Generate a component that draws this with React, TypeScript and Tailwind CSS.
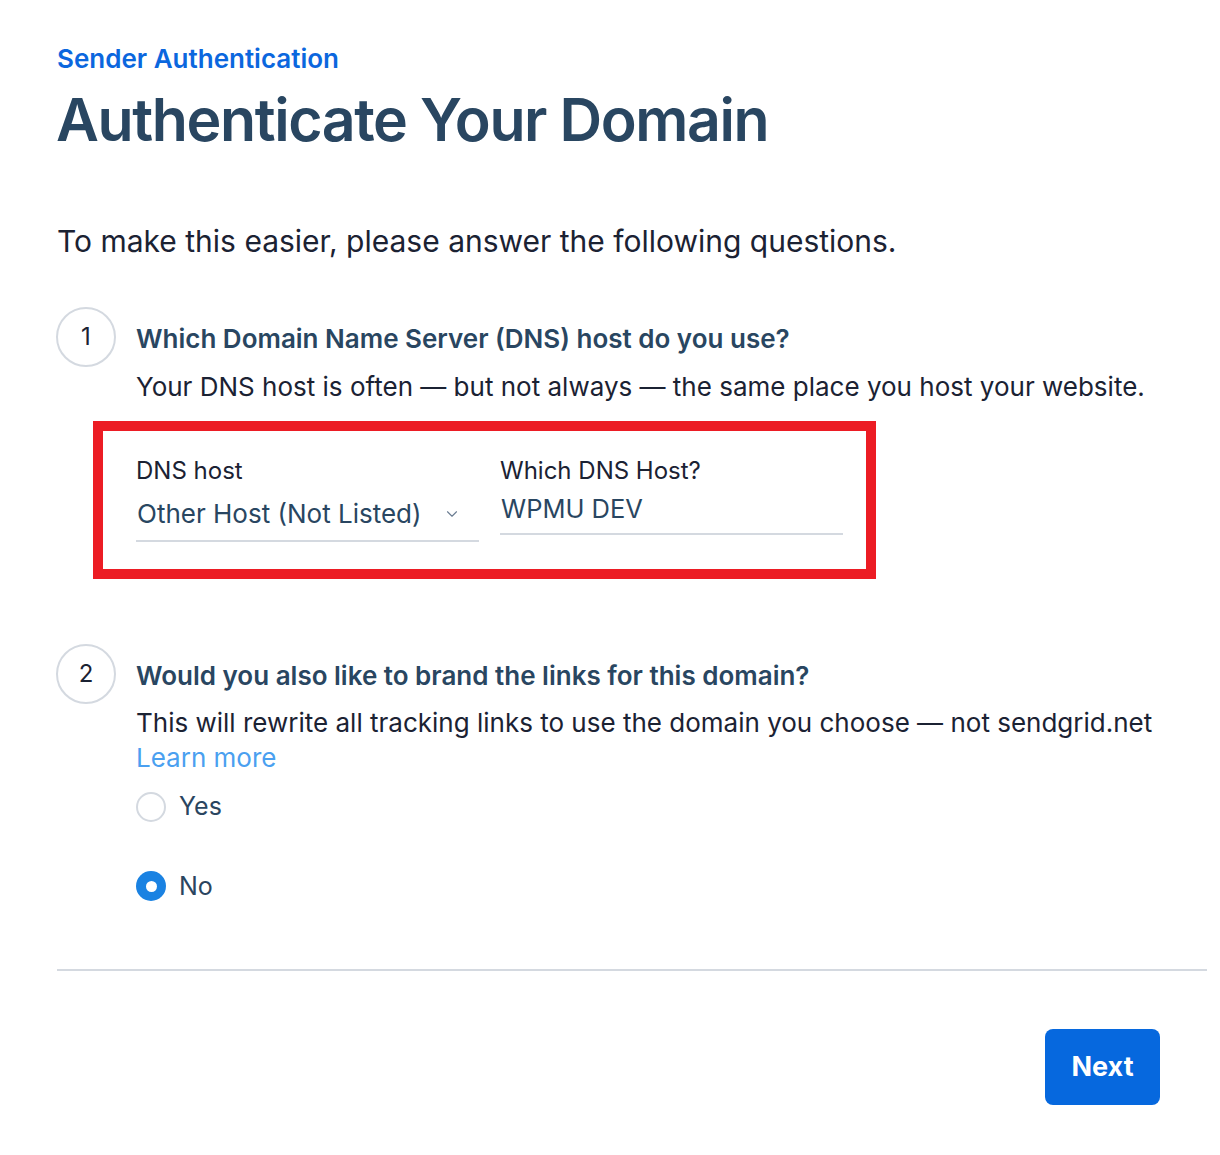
import { ChevronDown } from 'lucide-react'

function StepCircle({ n }: { n: number }) {
  return (
    <div className="flex h-[60px] w-[60px] shrink-0 items-center justify-center rounded-full border-2 border-[#d4d9e0] text-[24px] text-[#1b2233]">
      {n}
    </div>
  )
}

function Radio({ label, checked }: { label: string; checked?: boolean }) {
  return (
    <label className="flex items-center gap-[13px]">
      {checked ? (
        <span className="flex h-[30px] w-[30px] items-center justify-center rounded-full bg-[#1a82e2]">
          <span className="h-[11px] w-[11px] rounded-full bg-white" />
        </span>
      ) : (
        <span className="h-[30px] w-[30px] rounded-full border-2 border-[#d4d9e0] bg-white" />
      )}
      <span className="text-[25px] text-[#2a4560]">{label}</span>
    </label>
  )
}

export default function App() {
  return (
    <div className="min-h-[1155px] bg-white pl-[57px] pr-[13px] pt-[40px] font-['Inter',sans-serif]">
      <p className="text-[26px] font-semibold leading-[38px] text-[#0b67de]">Sender Authentication</p>
      <h1 className="-ml-px mt-[2px] text-[59px] font-semibold leading-[80px] tracking-[-1.4px] text-[#294661]">
        Authenticate Your Domain
      </h1>

      <p className="mt-[61px] text-[30px] leading-[40px] text-[#1b2233]">
        To make this easier, please answer the following questions.
      </p>

      {/* Step 1 */}
      <div className="mt-[46px] flex gap-[20px] -ml-px">
        <StepCircle n={1} />
        <div className="flex-1 pt-[15px]">
          <p className="text-[26px] font-semibold leading-[34px] text-[#294661]">
            Which Domain Name Server (DNS) host do you use?
          </p>
          <p className="mt-[14px] text-[26px] leading-[34px] text-[#1b2233]">
            Your DNS host is often — but not always — the same place you host your website.
          </p>

          <div className="-ml-[43px] mt-[17px] w-[783px] border-[10px] border-[#ec1c24] pb-[27px] pl-[33px] pt-[25px]">
            <div className="flex gap-[21px]">
              <div className="w-[343px]">
                <p className="text-[24px] leading-[30px] text-[#1b2233]">DNS host</p>
                <div className="mt-[12px] flex items-center justify-between border-b-2 border-[#d4d9e0] pb-[10px] pl-px pr-[18px]">
                  <span className="text-[26px] leading-[32px] text-[#294661]">Other Host (Not Listed)</span>
                  <ChevronDown className="h-[18px] w-[18px] text-[#6b7d92]" strokeWidth={1.5} />
                </div>
              </div>
              <div className="w-[343px]">
                <p className="text-[24px] leading-[30px] text-[#1b2233]">Which DNS Host?</p>
                <div className="mt-[7px] border-b-2 border-[#d4d9e0] pb-[8px] pl-px">
                  <span className="text-[25.5px] leading-[32px] text-[#294661]">WPMU DEV</span>
                </div>
              </div>
            </div>
          </div>
        </div>
      </div>

      {/* Step 2 */}
      <div className="mt-[65px] flex gap-[20px] -ml-px">
        <StepCircle n={2} />
        <div className="flex-1 pt-[15px]">
          <p className="text-[26px] font-semibold leading-[34px] text-[#294661]">
            Would you also like to brand the links for this domain?
          </p>
          <p className="mt-[13px] text-[26px] leading-[34px] text-[#1b2233]">
            This will rewrite all tracking links to use the domain you choose — not sendgrid.net
          </p>
          <a className="block text-[26px] leading-[36px] text-[#4aa0f0]">Learn more</a>
          <div className="mt-[12px] flex flex-col gap-[42px]">
            <Radio label="Yes" />
            <Radio label="No" checked />
          </div>
        </div>
      </div>

      <div className="mt-[64px] border-t-2 border-[#d4d9e0]" />

      <div className="mt-[58px] flex justify-end pr-[47px]">
        <button className="h-[76px] w-[115px] rounded-[8px] bg-[#0668de] text-[27px] font-bold text-white">
          Next
        </button>
      </div>
    </div>
  )
}
